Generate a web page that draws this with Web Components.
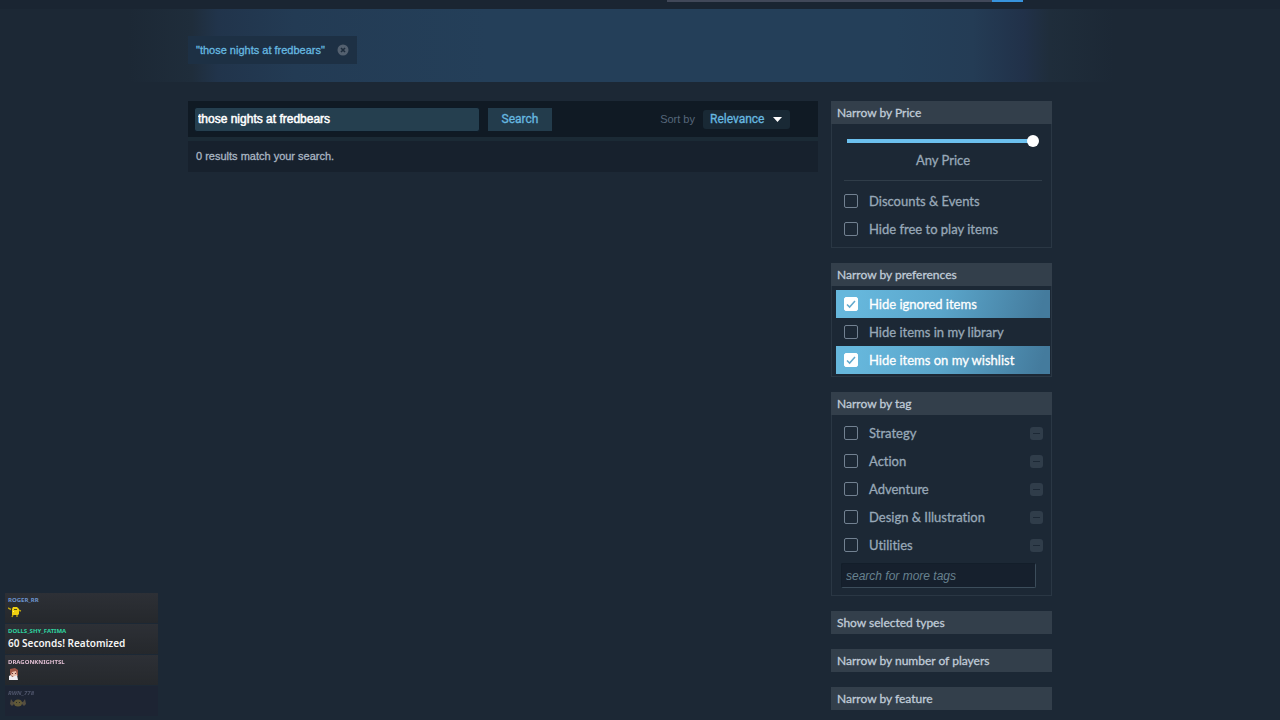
<!DOCTYPE html>
<html lang="en">
<head>
<meta charset="utf-8">
<title>Search results</title>
<style>
  html { background: #1c2835; }
  body {
    margin: 0;
    min-height: 100vh;
    font-family: "Liberation Sans", Arial, sans-serif;
    font-size: 11px;
    color: #b4c2d2;
    font-variant-ligatures: none;
    --sans: Lato, "Noto Sans", sans-serif;
    --narrow: Roboto, "Noto Sans", sans-serif;
    --chat: "Noto Sans", "Open Sans", sans-serif;
    --accent: #67b9e0;
  }
</style>
</head>
<body>
<store-page>
  <top-strip slot="top"></top-strip>
  <term-banner slot="banner"><term-chip>"those nights at fredbears"</term-chip></term-banner>
  <search-panel slot="main" term="those nights at fredbears">0 results match your search.</search-panel>
  <filter-block heading="Narrow by Price" open roomy>
    <price-range>Any Price</price-range>
    <filter-row>Discounts &amp; Events</filter-row>
    <filter-row>Hide free to play items</filter-row>
  </filter-block>
  <filter-block heading="Narrow by preferences" open>
    <filter-row checked>Hide ignored items</filter-row>
    <filter-row>Hide items in my library</filter-row>
    <filter-row checked>Hide items on my wishlist</filter-row>
  </filter-block>
  <filter-block heading="Narrow by tag" open>
    <filter-row excludable>Strategy</filter-row>
    <filter-row excludable>Action</filter-row>
    <filter-row excludable>Adventure</filter-row>
    <filter-row excludable>Design &amp; Illustration</filter-row>
    <filter-row excludable>Utilities</filter-row>
    <tag-search></tag-search>
  </filter-block>
  <filter-block heading="Show selected types"></filter-block>
  <filter-block heading="Narrow by number of players"></filter-block>
  <filter-block heading="Narrow by feature"></filter-block>
</store-page>

<chat-overlay>
  <chat-message name="ROGER_RR" style="--name:#6d93cf">
    <svg width="14" height="12" viewBox="0 0 14 12" aria-hidden="true">
      <path d="M0 2l3 1.500M13 5l-3-1M5 9l-1 2M9 9v2" stroke="#b9a113" stroke-width="1.400" fill="none"/>
      <path d="M4 3l1-2h4l2 2v5l-1 1H4z" fill="#efcf10"/><path d="M6 3h3v1H6z" fill="#544c12"/><path d="M5 5h1v1H5z" fill="#fff27a"/>
    </svg>
  </chat-message>
  <chat-message name="DOLLS_SHY_FATIMA" style="--name:#2fd3a0">60 Seconds! Reatomized</chat-message>
  <chat-message name="DRAGONKNIGHTSL" style="--name:#e2bfd4">
    <svg width="12" height="12" viewBox="0 0 12 12" aria-hidden="true">
      <path d="M2 1l5-1 3 2v6l-7 1-1-3z" fill="#9c5545"/><path d="M4 4l4-1 1 4-3 2-3-2z" fill="#e9bdab"/>
      <path d="M1 8l2-1 1 2 5-2 1 5H1z" fill="#f0edf2"/><path d="M4 5h1v1H4zM7 5h1v1H7z" fill="#613034"/>
    </svg>
  </chat-message>
  <chat-message name="RWN_778" style="--name:#8a8fae" fading>
    <svg width="20" height="12" viewBox="0 0 20 12" aria-hidden="true">
      <path d="M3 2l2 3h10l2-3 1 5-2 2-2-2H6L4 9 2 7z" fill="#9a8250"/><ellipse cx="10" cy="6" rx="4" ry="3.500" fill="#b59a3c"/><path d="M8 5h1v1H8zM11 5h1v1h-1z" fill="#3c3420"/>
    </svg>
  </chat-message>
</chat-overlay>

<script>
  const define = (name, markup, setup) => {
    const template = document.createElement('template');
    template.innerHTML = markup;
    customElements.define(name, class extends HTMLElement {
      constructor() {
        super();
        this.attachShadow({ mode: 'open' }).append(template.content.cloneNode(true));
      }
      connectedCallback() {
        if (setup) setup(this, this.shadowRoot);
      }
    });
  };

  define('store-page', `
    <style>
      :host { display: block; }
      .columns {
        display: grid; grid-template-columns: minmax(0, 1fr) 221px; gap: 13px; align-items: start;
        max-width: 864px; margin: 0 auto; padding: 19px 0 10px;
      }
      main, ::slotted([slot=top]), ::slotted([slot=banner]) { min-width: 0; }
      .wrap { padding-right: 40px; }
      aside { display: flex; flex-direction: column; gap: 15px; }
    </style>
    <slot name="top"></slot>
    <slot name="banner"></slot>
    <div class="wrap"><div class="columns">
      <main><slot name="main"></slot></main>
      <aside aria-label="Filters"><slot></slot></aside>
    </div></div>`);

  define('top-strip', `
    <style>
      :host { display: block; height: 9px; padding-right: 40px; background: #1a2532; }
      .bar { display: flex; justify-content: flex-end; max-width: 864px; margin: 0 auto; height: 2px; }
      .field { width: 325px; background: #414859; }
      .go { width: 31px; margin-right: 29px; background: #3793dc; }
    </style>
    <div class="bar"><span class="field"></span><span class="go"></span></div>`);

  define('term-banner', `
    <style>
      :host {
        display: block; padding-right: 40px;
        background: linear-gradient(90deg, #1c2835 10%, #1f2d3b 15%, #21344b 17%, #233b54 23%, #243f59 38%, #243f59 70%, #243c55 76%, #213149 80%, #1f2d3b 82%, #1c2835 87%);
      }
      .inner { max-width: 864px; margin: 0 auto; padding: 27px 0 18px; display: flex; }
    </style>
    <div class="inner"><slot></slot></div>`);

  define('term-chip', `
    <style>
      :host {
        display: flex; align-items: center; gap: 12px; height: 28px; padding: 0 8px;
        background: #1d3044; color: var(--accent); -webkit-text-stroke: 0.3px currentColor;
      }
      button { display: flex; padding: 0; border: 0; background: none; cursor: pointer; }
    </style>
    <span><slot></slot></span>
    <button aria-label="Remove term">
      <svg width="12" height="12" viewBox="0 0 12 12"><circle cx="6" cy="6" r="5.500" fill="#53606f"/><path d="M4 4l4 4M8 4l-4 4" stroke="#1d2c3c" stroke-width="1.600"/></svg>
    </button>`);

  define('search-panel', `
    <style>
      :host { display: block; }
      form { display: flex; align-items: center; height: 36px; padding: 0 28px 0 6px; background: #101a24; border-bottom: 4px solid #1b2a35; }
      input {
        box-sizing: border-box; flex: 0 1 286px; min-width: 80px; height: 25px; padding: 0 3px;
        border: 1px solid #0d1a26; border-radius: 3px; background: #253f4f; color: #fff;
        font: 12px "Liberation Sans", Arial, sans-serif; -webkit-text-stroke: 0.5px currentColor; outline: none;
      }
      button { height: 23px; width: 64px; margin-left: 8px; padding: 0; border: 0; background: #233c4c; color: var(--accent); font: 12px var(--narrow); -webkit-text-stroke: 0.3px currentColor; }
      .sort { margin-left: auto; margin-right: 8px; color: #56677a; font-family: "Liberation Sans", Arial, sans-serif; font-size: 11px; }
      .pick { display: grid; align-items: center; width: 87px; height: 19px; border-radius: 3px; background: #192935; }
      .pick > * { grid-area: 1 / 1; }
      select {
        appearance: none; width: 100%; height: 19px; padding: 0 7px; border: 0; background: none;
        color: var(--accent); font: 12px var(--narrow); -webkit-text-stroke: 0.3px currentColor; outline: none;
      }
      svg { justify-self: end; margin-right: 8px; pointer-events: none; }
      p { margin: 0; padding: 0 8px; line-height: 31px; background: #17212d; color: #a9b5c2; -webkit-text-stroke: 0.3px currentColor; }
    </style>
    <form>
      <input type="text" aria-label="Search term">
      <button type="button">Search</button>
      <label class="sort" for="sort">Sort by</label>
      <span class="pick">
        <select id="sort"><option>Relevance</option></select>
        <svg width="9" height="5" viewBox="0 0 9 5"><path d="M0 0h9L4.500 5z" fill="#fff"/></svg>
      </span>
    </form>
    <p><slot></slot></p>`, (host, root) => {
      root.querySelector('input').value = host.getAttribute('term') || '';
    });

  define('filter-block', `
    <style>
      :host { display: block; font-family: var(--sans); }
      h2 { margin: 0; font: inherit; }
      button {
        display: block; width: 100%; height: 23px; padding: 0 6px; border: 0; background: #333f4b;
        color: #c0ccd8; font: 12px var(--sans); -webkit-text-stroke: 0.3px currentColor; text-align: left;
      }
      .body { display: none; padding: 4px 1px 2px 4px; border: 1px solid #2a3744; border-top: 0; }
      :host([open]) .body { display: block; }
      :host([roomy]) .body { padding-bottom: 4px; }
    </style>
    <h2><button></button></h2>
    <div class="body"><slot></slot></div>`, (host, root) => {
      const button = root.querySelector('button');
      button.textContent = host.getAttribute('heading');
      button.setAttribute('aria-expanded', host.hasAttribute('open'));
      button.onclick = () => button.setAttribute('aria-expanded', host.toggleAttribute('open'));
    });

  define('filter-row', `
    <style>
      :host { display: flex; align-items: center; height: 28px; padding: 0 7px 0 8px; color: #98a8b8; }
      :host([checked]) { background: linear-gradient(105deg, #66b7dc 10%, #5aa5ca 50%, #447b9d 95%); color: #fff; }
      label { display: flex; flex: 1; align-items: center; gap: 11px; font-family: var(--sans); font-size: 13px; -webkit-text-stroke: 0.3px currentColor; white-space: nowrap; }
      .box { display: grid; width: 14px; height: 14px; }
      .box > * { grid-area: 1 / 1; }
      input { appearance: none; box-sizing: border-box; width: 14px; height: 14px; margin: 0; border: 1px solid #728191; border-radius: 2px; }
      input:checked { border-color: #fff; background: #fff; }
      svg { pointer-events: none; }
      .tick { visibility: hidden; }
      input:checked + .tick { visibility: visible; }
      button { display: none; width: 13px; height: 13px; padding: 0; border: 0; border-radius: 3px; background: #303d4a; }
      :host([excludable]) button { display: block; }
      button svg { display: block; }
    </style>
    <label>
      <span class="box"><input type="checkbox"><svg class="tick" width="14" height="14" viewBox="0 0 14 14"><path d="M3 7.500l2.600 2.600L11 4" fill="none" stroke="#62a9cd" stroke-width="1.500"/></svg></span>
      <span><slot></slot></span>
    </label>
    <button aria-label="Exclude tag"><svg width="13" height="13" viewBox="0 0 13 13"><path d="M3 6.500h7" stroke="#1c2835"/></svg></button>`, (host, root) => {
      const input = root.querySelector('input');
      input.checked = host.hasAttribute('checked');
      input.onchange = () => host.toggleAttribute('checked', input.checked);
    });

  define('price-range', `
    <style>
      :host { display: block; margin: 0 8px 6px; border-bottom: 1px solid #303d49; padding: 7px 0 11px; }
      input { appearance: none; display: block; box-sizing: border-box; width: 192px; height: 12px; margin: 0 3px; background: none; }
      input::-webkit-slider-runnable-track { height: 4px; background: linear-gradient(90deg, #6cc0ee 97%, transparent 97%); }
      input::-webkit-slider-thumb { appearance: none; width: 12px; height: 12px; margin-top: -4px; border-radius: 50%; background: #fff; }
      label { display: block; margin-top: 4px; text-align: center; font: 400 13px/18px var(--sans); color: #98a8b8; -webkit-text-stroke: 0.3px currentColor; }
    </style>
    <input id="price" type="range" min="0" max="13" value="13">
    <label for="price"><slot></slot></label>`);

  define('tag-search', `
    <style>
      :host { display: block; padding: 4px 14px 5px 5px; }
      input {
        display: block; box-sizing: border-box; width: 100%; height: 25px; padding: 0 4px; border: 1px solid #131e2a;
        border-right-color: #3c4d5b; border-bottom-color: #3c4d5b; border-radius: 2px; background: #16202d;
        font: italic 12px "Liberation Sans", Arial, sans-serif; outline: none;
      }
      input::placeholder { color: #68828f; }
    </style>
    <input type="text" placeholder="search for more tags" aria-label="Search for more tags">`);

  define('chat-overlay', `
    <style>
      :host { position: fixed; left: 5px; bottom: 4px; width: 153px; display: flex; flex-direction: column; gap: 1px; font-family: var(--chat); }
    </style>
    <slot></slot>`);

  define('chat-message', `
    <style>
      :host { display: block; box-sizing: border-box; height: 30px; padding: 3px; background: linear-gradient(#2d3036, #25282c); color: #f4f4f4; font-size: 10px; font-weight: 600; line-height: 16px; }
      :host([fading]) { background: #1d2433; }
      :host([fading]) .all { opacity: 0.45; }
      .name { font-size: 6px; line-height: 8px; font-weight: 700; color: var(--name); }
      :host([fading]) .name { font-style: italic; }
      ::slotted(svg) { display: block; margin-top: 2px; }
      :host([fading]) ::slotted(svg) { margin-top: 0; }
      .text { white-space: nowrap; }
    </style>
    <div class="all"><div class="name"></div><div class="text"><slot></slot></div></div>`, (host, root) => {
      root.querySelector('.name').textContent = host.getAttribute('name');
    });
</script>
</body>
</html>
